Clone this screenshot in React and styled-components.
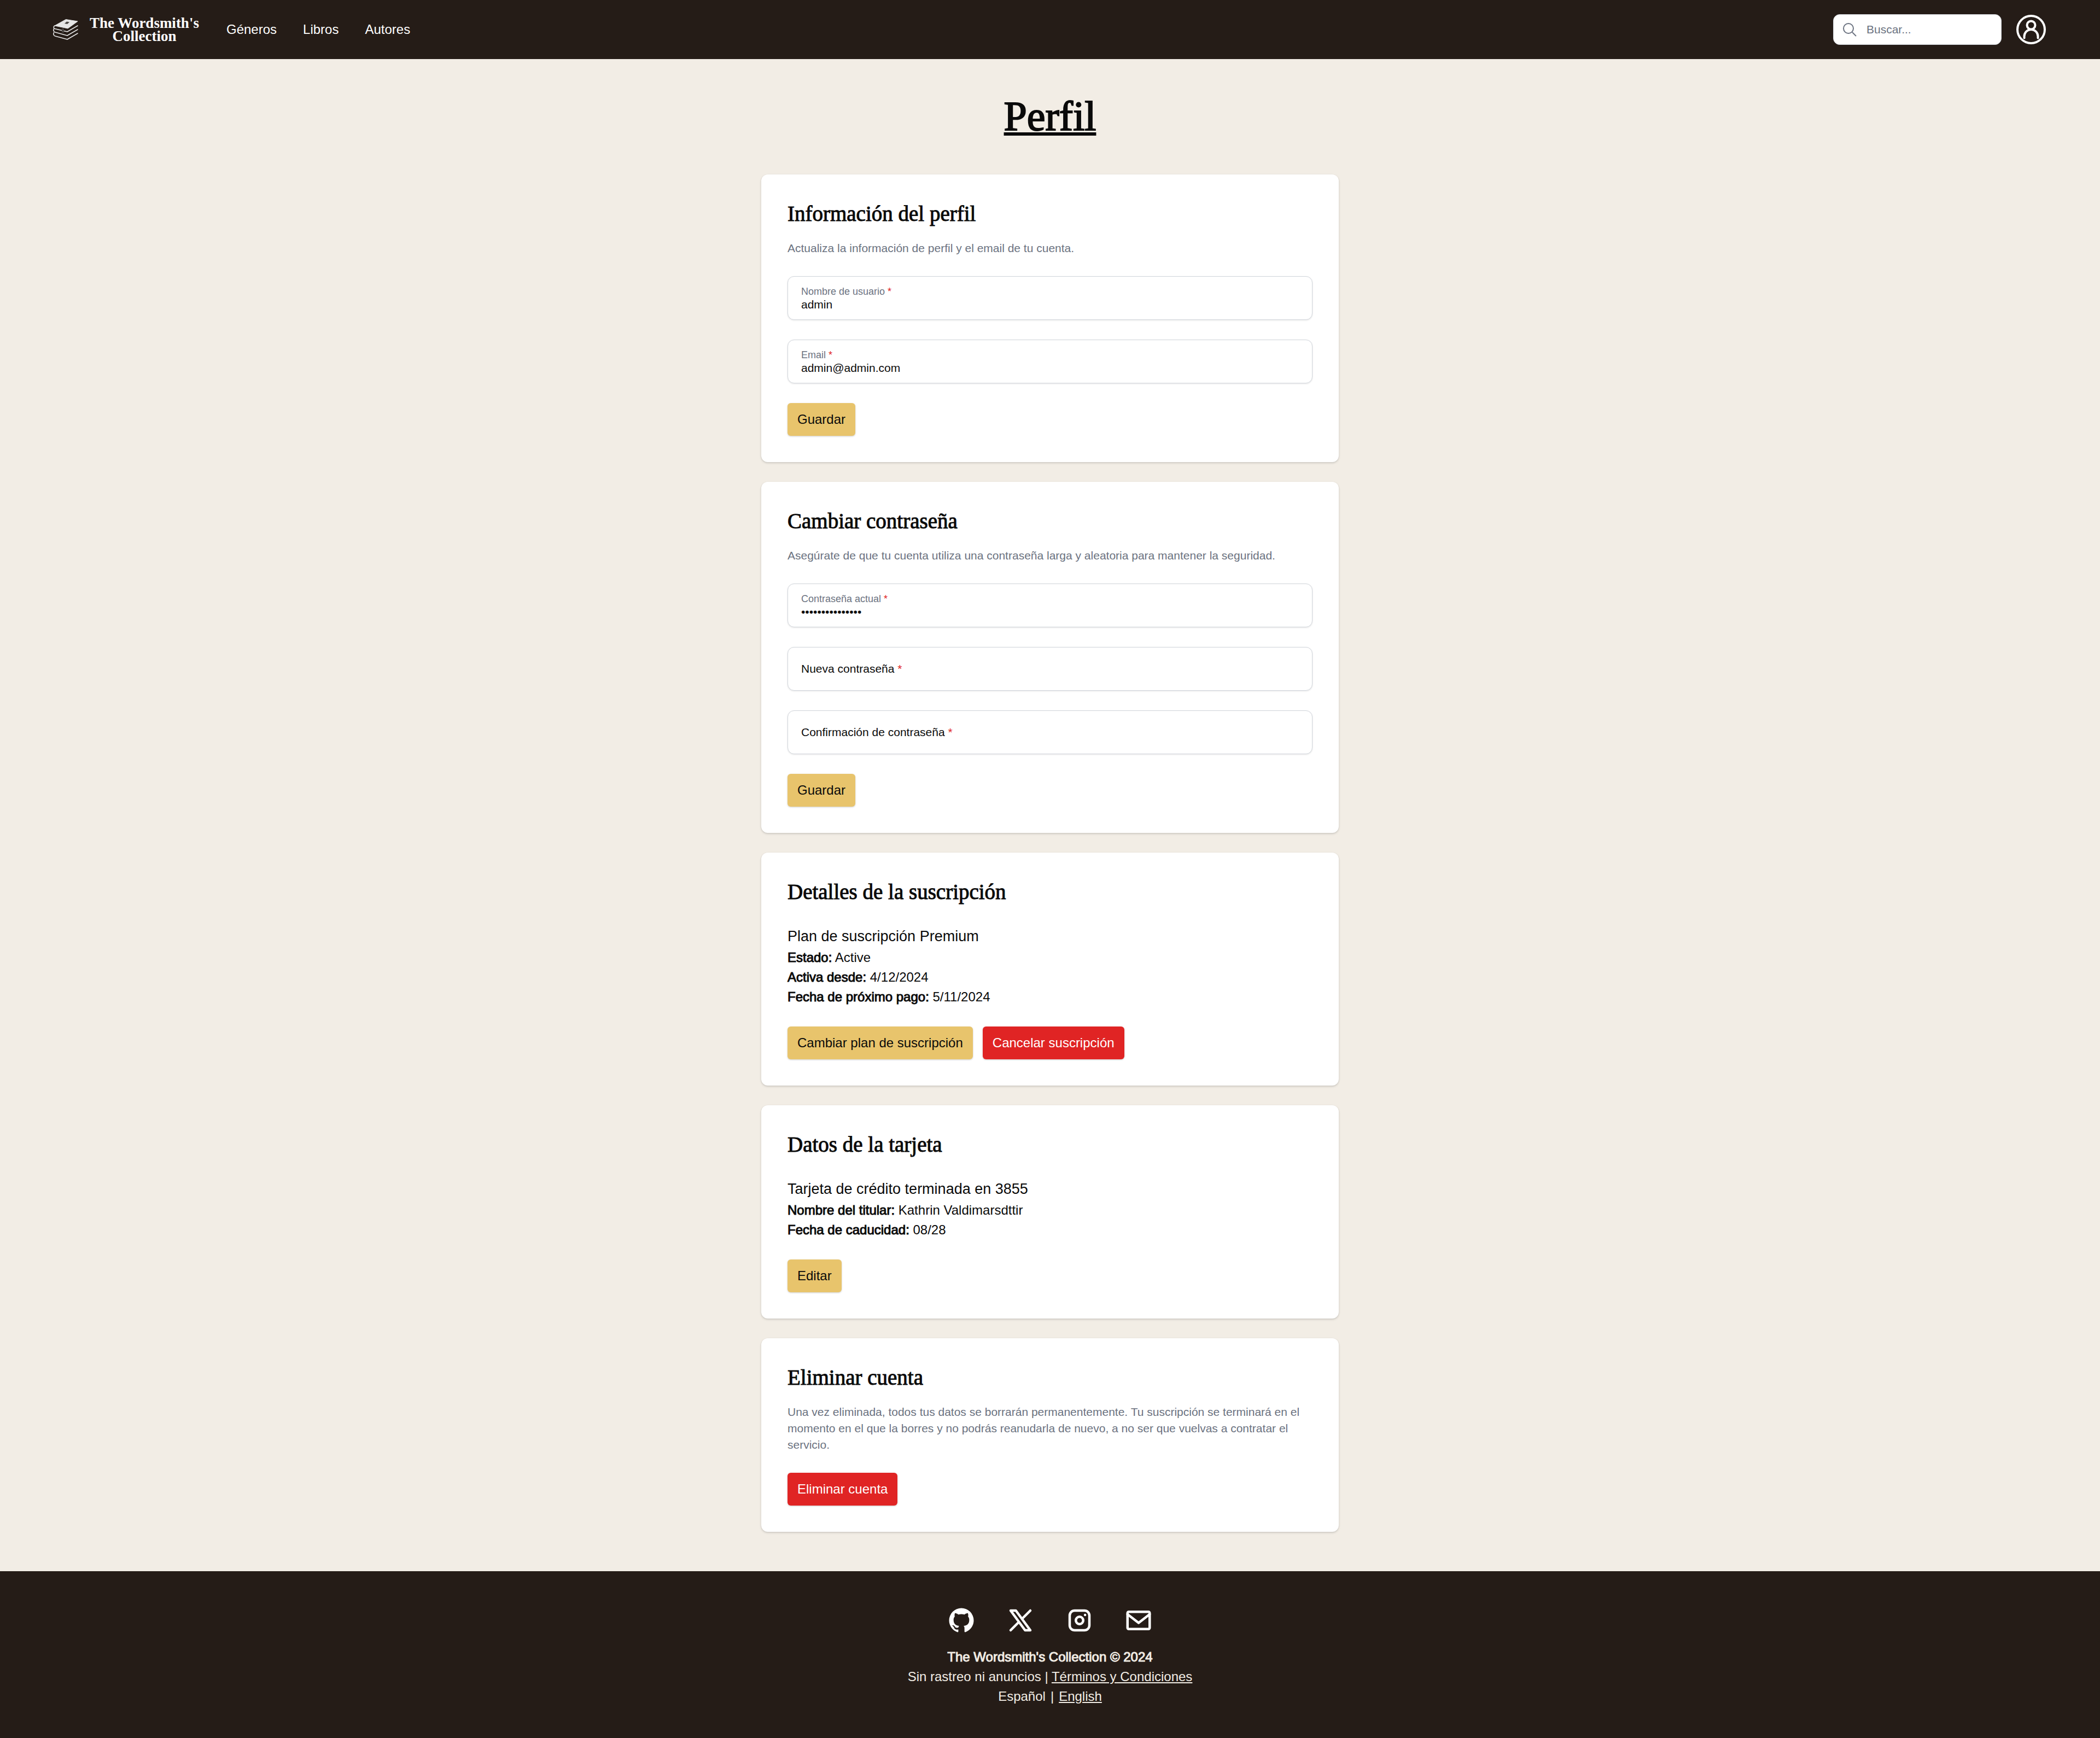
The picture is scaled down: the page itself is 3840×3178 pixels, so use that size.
import React from "react";
import styled, { createGlobalStyle, css } from "styled-components";

const GlobalStyle = createGlobalStyle`
  *, *::before, *::after { box-sizing: border-box; }
  body {
    margin: 0;
    background: #f2ede5;
    color: #0a0a0a;
    font-family: "Liberation Sans", Arial, sans-serif;
    font-size: 24px;
    line-height: 36px;
  }
  h1, h2, p, ul { margin: 0; padding: 0; }
  a { color: inherit; }
`;

const serif = css`
  font-family: "Liberation Serif", "Times New Roman", serif;
  font-weight: 400;
  -webkit-text-stroke: 1px currentColor;
`;

const Header = styled.header`
  display: flex;
  align-items: center;
  justify-content: space-between;
  height: 108px;
  padding: 0 96px;
  background: #251c17;
  color: #fff;
`;

const Nav = styled.nav`
  display: flex;
  align-items: center;
  gap: 48px;
`;

const Brand = styled.a`
  display: flex;
  align-items: center;
  gap: 18px;
  text-decoration: none;
`;

const BrandName = styled.span`
  width: 204px;
  font-family: "Liberation Serif", "Times New Roman", serif;
  font-size: 27px;
  font-weight: 700;
  line-height: 24px;
  text-align: center;
`;

const NavLink = styled.a`
  text-decoration: none;
`;

const Tools = styled.div`
  display: flex;
  align-items: center;
  gap: 24px;
`;

const SearchBox = styled.label`
  display: flex;
  align-items: center;
  gap: 18px;
  width: 308px;
  height: 56px;
  padding: 0 17px;
  border: 1px solid #d1d5db;
  border-radius: 12px;
  background: #fff;
  color: #6b7280;
`;

const SearchInput = styled.input`
  flex: 1;
  min-width: 0;
  padding: 0;
  border: 0;
  outline: 0;
  background: none;
  color: #0a0a0a;
  font: inherit;
  font-size: 21px;
  line-height: 30px;
  &::placeholder { color: #6b7280; opacity: 1; }
`;

const IconButton = styled.button`
  display: flex;
  padding: 0;
  border: 0;
  background: none;
  color: #fff;
  cursor: pointer;
`;

const Main = styled.main`
  display: flex;
  flex-direction: column;
  align-items: center;
  padding: 72px 24px;
`;

const Title = styled.h1`
  ${serif}
  margin-bottom: 75px;
  font-size: 76px;
  line-height: 64px;
  -webkit-text-stroke-width: 2px;
  text-decoration: underline;
  text-decoration-thickness: 6px;
  text-underline-offset: 4px;
  text-decoration-skip-ink: none;
`;

const Stack = styled.div`
  display: flex;
  flex-direction: column;
  gap: 36px;
  width: 100%;
  max-width: 1056px;
`;

const Card = styled.section`
  display: flex;
  flex-direction: column;
  gap: 36px;
  padding: 48px;
  border-radius: 12px;
  background: #fff;
  box-shadow: 0 1px 3px rgba(0, 0, 0, 0.1), 0 2px 4px rgba(0, 0, 0, 0.1);
`;

const CardHead = styled.header`
  display: flex;
  flex-direction: column;
  gap: 24px;
`;

const CardTitle = styled.h2`
  ${serif}
  font-size: 39px;
  line-height: 48px;
`;

const CardText = styled.p`
  color: #6b7280;
  font-size: 21px;
  line-height: 30px;
`;

const Form = styled.form`
  display: flex;
  flex-direction: column;
  gap: 36px;
`;

const FieldBox = styled.div`
  display: grid;
`;

const FieldLabel = styled.label`
  grid-area: 1 / 1;
  z-index: 1;
  padding: 0 25px;
  line-height: 24px;
  pointer-events: none;
  ${({ $raised }) =>
    $raised
      ? css`
          align-self: start;
          margin-top: 16px;
          color: #6b7280;
          font-size: 18px;
        `
      : css`
          align-self: center;
          font-size: 21px;
        `}
`;

const Required = styled.span`
  color: #e02424;
`;

const FieldInput = styled.input`
  grid-area: 1 / 1;
  width: 100%;
  height: 80px;
  padding: 39px 24px 15px;
  border: 1px solid #d1d5db;
  border-radius: 12px;
  outline: 0;
  background: #fff;
  box-shadow: 0 1px 3px rgba(0, 0, 0, 0.1);
  color: #0a0a0a;
  font: inherit;
  font-size: 21px;
  line-height: 24px;
`;

const Actions = styled.div`
  display: flex;
  flex-wrap: wrap;
  gap: 18px;
`;

const Button = styled.button`
  padding: 12px 18px;
  border: 0;
  border-radius: 6px;
  background: ${({ $danger }) => ($danger ? "#e02424" : "#e8c46c")};
  color: ${({ $danger }) => ($danger ? "#fff" : "#0a0a0a")};
  box-shadow: 0 1px 3px rgba(0, 0, 0, 0.2);
  font: inherit;
  cursor: pointer;
`;

const Lead = styled.p`
  font-size: 27px;
  line-height: 42px;
`;

const Strong = styled.span`
  -webkit-text-stroke: 1px currentColor;
`;

const Footer = styled.footer`
  display: flex;
  flex-direction: column;
  align-items: center;
  gap: 22px;
  padding: 63px 24px 58px;
  background: #251c17;
  color: #f2ede5;
  text-align: center;
`;

const Social = styled.ul`
  display: flex;
  gap: 54px;
  list-style: none;
`;

const SocialLink = styled.a`
  display: block;
  color: #fff;
  svg { display: block; }
`;

const Languages = styled.p`
  display: flex;
  justify-content: center;
  gap: 9px;
`;

function BooksIcon() {
  return (
    <svg width="48" height="40" viewBox="0 0 48 40" fill="none" aria-hidden="true">
      <path d="M24.500 1.500 46 5 28 18 4 13Z" fill="#e5e5e5" stroke="#e5e5e5" strokeLinejoin="round" />
      <path d="m26 5.500 5 1-4 3.500-5-1z" fill="#4a4643" />
      <g stroke="#e5e5e5" strokeWidth="1.600" strokeLinejoin="round" strokeLinecap="round">
        <path d="M4 13c-2.500 1.500-2.500 4.500 0 5.500L27 24l19-11" />
        <path d="M2.500 18.500c-1.500 3 0 6 2.500 6.500l22 6 19-11" />
        <path d="M2.500 25.500c-1.500 3 0 6 2.500 6.500l22 6 19-11" />
      </g>
      <path d="M17 18h4v8l-2-1-2 1z" fill="#4a4643" />
    </svg>
  );
}

function Field({ id, label, value, type = "text" }) {
  return (
    <FieldBox>
      <FieldLabel htmlFor={id} $raised={Boolean(value)}>
        {label} <Required>*</Required>
      </FieldLabel>
      <FieldInput id={id} type={type} defaultValue={value} required />
    </FieldBox>
  );
}

function Fact({ name, children }) {
  return (
    <p>
      <Strong>{name}:</Strong> {children}
    </p>
  );
}

const stroke = {
  fill: "none",
  stroke: "currentColor",
  strokeWidth: 2,
  strokeLinecap: "round",
  strokeLinejoin: "round",
};

const socials = [
  {
    name: "GitHub",
    art: (
      <path
        fill="currentColor"
        d="M12 2A10 10 0 0 0 2 12c0 4.42 2.87 8.17 6.84 9.5.5.08.66-.23.66-.5v-1.69c-2.77.6-3.36-1.34-3.36-1.34-.46-1.16-1.11-1.47-1.11-1.47-.91-.62.07-.6.07-.6 1 .07 1.53 1.03 1.53 1.03.87 1.52 2.34 1.07 2.91.83.09-.65.35-1.09.63-1.34-2.22-.25-4.55-1.11-4.55-4.92 0-1.11.38-2 1.03-2.71-.1-.25-.45-1.29.1-2.64 0 0 .84-.27 2.75 1.02.79-.22 1.65-.33 2.5-.33s1.71.11 2.5.33c1.91-1.29 2.75-1.02 2.75-1.02.55 1.35.2 2.39.1 2.64.65.71 1.03 1.6 1.03 2.71 0 3.82-2.34 4.66-4.57 4.91.36.31.69.92.69 1.85V21c0 .27.16.59.67.5C19.14 20.16 22 16.42 22 12A10 10 0 0 0 12 2"
      />
    ),
  },
  {
    name: "X",
    art: <path {...stroke} d="m4 4 11.733 16H20L8.267 4zm0 16 6.768-6.768m2.46-2.46L20 4" />,
  },
  {
    name: "Instagram",
    art: (
      <g {...stroke}>
        <rect x="4" y="4" width="16" height="16" rx="4" />
        <circle cx="12" cy="12" r="3" />
        <path d="M16.5 7.5v.01" />
      </g>
    ),
  },
  {
    name: "Email",
    art: (
      <g {...stroke}>
        <rect x="3" y="5" width="18" height="14" rx="1" />
        <path d="m3 7 9 7 9-7" />
      </g>
    ),
  },
];

export default function App() {
  return (
    <>
      <GlobalStyle />
      <Header>
        <Nav>
          <Brand href="#">
            <BooksIcon />
            <BrandName>The Wordsmith's Collection</BrandName>
          </Brand>
          <NavLink href="#">Géneros</NavLink>
          <NavLink href="#">Libros</NavLink>
          <NavLink href="#">Autores</NavLink>
        </Nav>
        <Tools>
          <SearchBox>
            <svg width="25" height="25" viewBox="0 0 25 25" fill="none" stroke="currentColor" strokeWidth="2" aria-hidden="true">
              <circle cx="10" cy="10" r="9" />
              <path d="m17 17 7 7" />
            </svg>
            <SearchInput type="search" placeholder="Buscar..." aria-label="Buscar" />
          </SearchBox>
          <IconButton type="button" aria-label="Cuenta">
            <svg width="60" height="60" viewBox="0 0 60 60" fill="none" stroke="currentColor" strokeWidth="4" strokeLinecap="round" aria-hidden="true">
              <circle cx="30" cy="30" r="25" />
              <circle cx="30" cy="22" r="7.5" />
              <path d="M17.5 45.500v-3a12.500 12.500 0 0 1 25 0v3" />
            </svg>
          </IconButton>
        </Tools>
      </Header>

      <Main>
        <Title>Perfil</Title>
        <Stack>
          <Card>
            <CardHead>
              <CardTitle>Información del perfil</CardTitle>
              <CardText>Actualiza la información de perfil y el email de tu cuenta.</CardText>
            </CardHead>
            <Form>
              <Field id="username" label="Nombre de usuario" value="admin" />
              <Field id="email" label="Email" type="email" value="admin@admin.com" />
              <Actions>
                <Button type="button">Guardar</Button>
              </Actions>
            </Form>
          </Card>

          <Card>
            <CardHead>
              <CardTitle>Cambiar contraseña</CardTitle>
              <CardText>
                Asegúrate de que tu cuenta utiliza una contraseña larga y aleatoria para mantener la seguridad.
              </CardText>
            </CardHead>
            <Form>
              <Field id="current" label="Contraseña actual" type="password" value="contrasena12345" />
              <Field id="new" label="Nueva contraseña" type="password" />
              <Field id="confirm" label="Confirmación de contraseña" type="password" />
              <Actions>
                <Button type="button">Guardar</Button>
              </Actions>
            </Form>
          </Card>

          <Card>
            <CardTitle>Detalles de la suscripción</CardTitle>
            <div>
              <Lead>Plan de suscripción Premium</Lead>
              <Fact name="Estado">Active</Fact>
              <Fact name="Activa desde">4/12/2024</Fact>
              <Fact name="Fecha de próximo pago">5/11/2024</Fact>
            </div>
            <Actions>
              <Button type="button">Cambiar plan de suscripción</Button>
              <Button type="button" $danger>Cancelar suscripción</Button>
            </Actions>
          </Card>

          <Card>
            <CardTitle>Datos de la tarjeta</CardTitle>
            <div>
              <Lead>Tarjeta de crédito terminada en 3855</Lead>
              <Fact name="Nombre del titular">Kathrin Valdimarsdttir</Fact>
              <Fact name="Fecha de caducidad">08/28</Fact>
            </div>
            <Actions>
              <Button type="button">Editar</Button>
            </Actions>
          </Card>

          <Card>
            <CardHead>
              <CardTitle>Eliminar cuenta</CardTitle>
              <CardText>
                Una vez eliminada, todos tus datos se borrarán permanentemente. Tu suscripción se terminará en el
                momento en el que la borres y no podrás reanudarla de nuevo, a no ser que vuelvas a contratar el
                servicio.
              </CardText>
            </CardHead>
            <Actions>
              <Button type="button" $danger>Eliminar cuenta</Button>
            </Actions>
          </Card>
        </Stack>
      </Main>

      <Footer>
        <Social>
          {socials.map(({ name, art }) => (
            <li key={name}>
              <SocialLink href="#" aria-label={name}>
                <svg width="54" height="54" viewBox="0 0 24 24" aria-hidden="true">{art}</svg>
              </SocialLink>
            </li>
          ))}
        </Social>
        <div>
          <p><Strong>The Wordsmith's Collection © 2024</Strong></p>
          <p>Sin rastreo ni anuncios | <a href="#">Términos y Condiciones</a></p>
          <Languages>
            <span>Español</span>
            <span>|</span>
            <a href="#">English</a>
          </Languages>
        </div>
      </Footer>
    </>
  );
}
